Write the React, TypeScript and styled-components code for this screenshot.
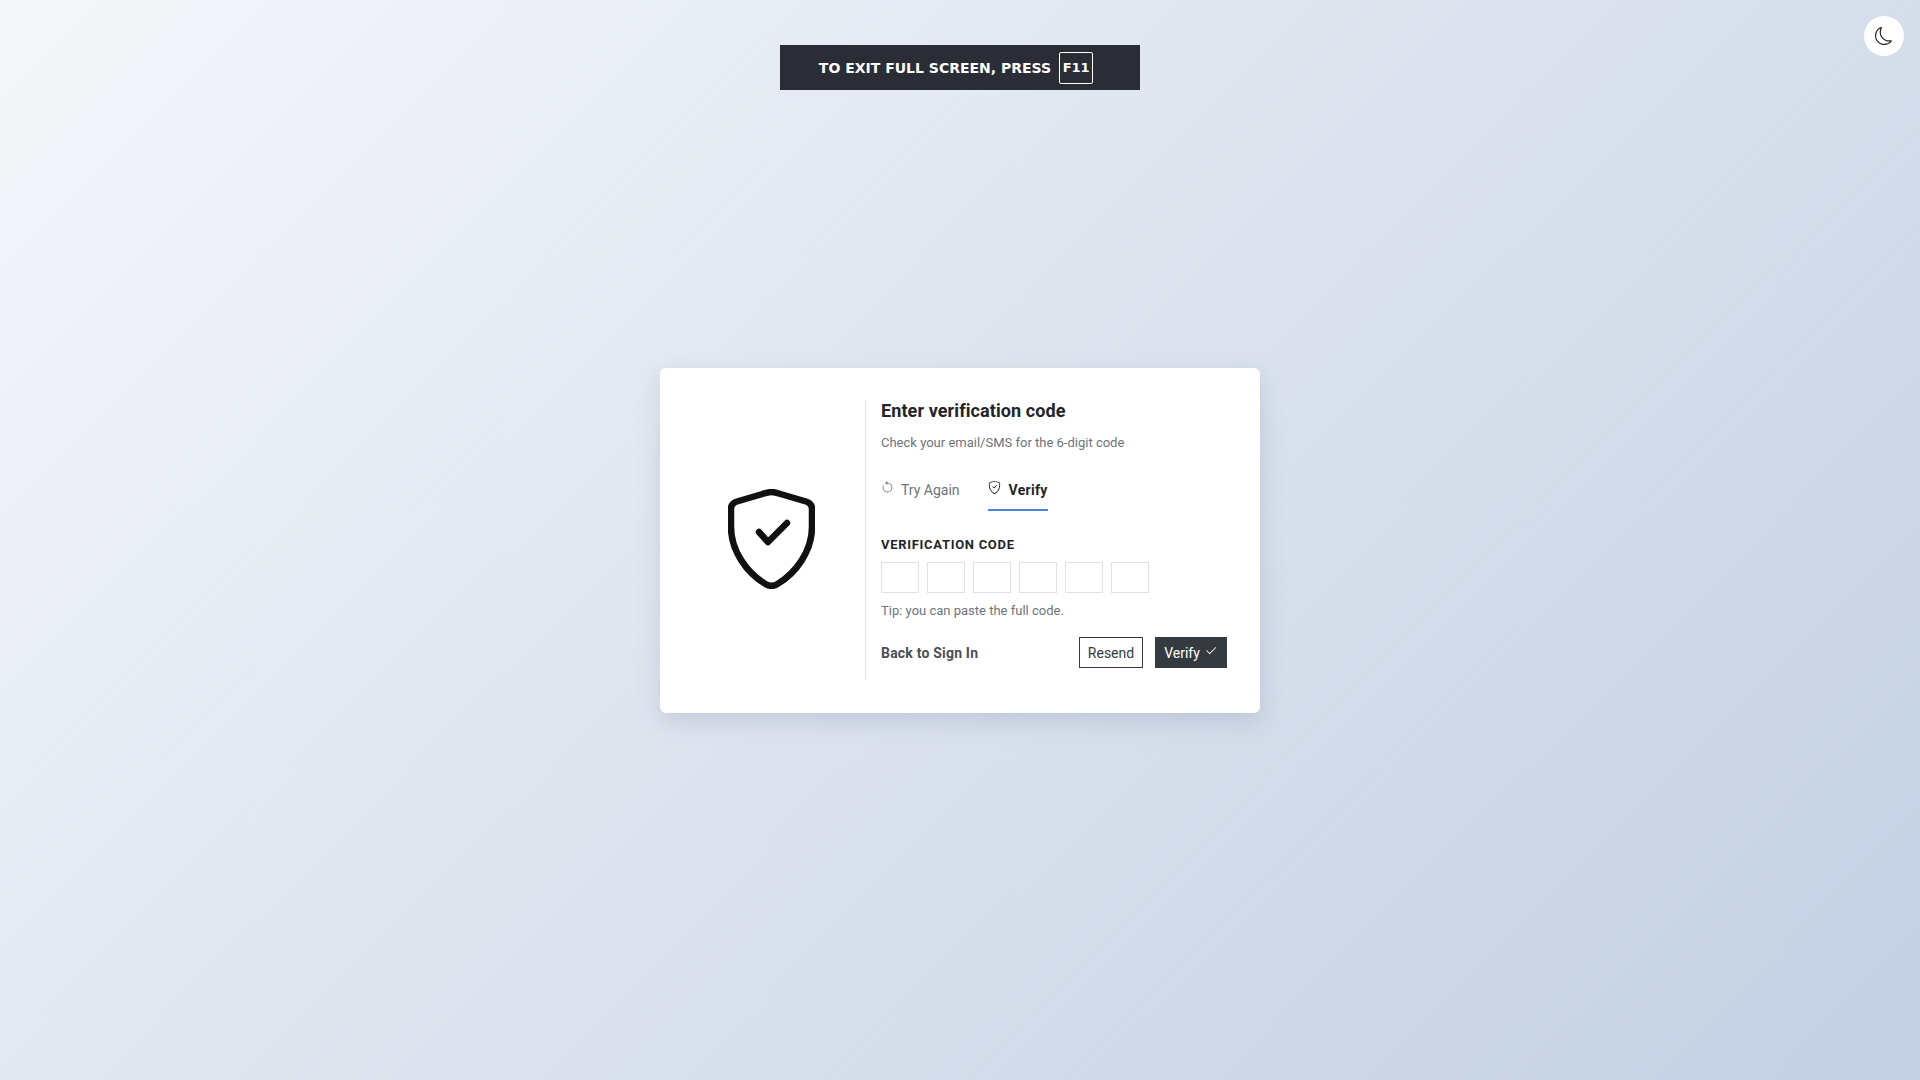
import React from "react";
import styled, { createGlobalStyle } from "styled-components";
import { BsMoon, BsArrowCounterclockwise, BsShieldCheck, BsCheck2 } from "react-icons/bs";

const Global = createGlobalStyle`
  html, body { margin: 0; padding: 0; }
  body { font-family: Roboto, "Noto Sans", sans-serif; }
  * { box-sizing: border-box; }
`;

const Page = styled.div`
  position: relative;
  min-height: 100vh;
  display: flex;
  align-items: center;
  justify-content: center;
  background: linear-gradient(135deg, #f5f7fa 0%, #c3cfe2 100%);
`;

const Banner = styled.div`
  position: absolute;
  top: 45px;
  left: 780px;
  width: 360px;
  height: 45px;
  padding-right: 8px;
  display: flex;
  align-items: center;
  justify-content: center;
  gap: 8px;
  background: #2a2d35;
  color: #fff;
  font-family: "DejaVu Sans", sans-serif;
  font-size: 14px;
  font-weight: 700;
  white-space: nowrap;
`;

const Key = styled.span`
  width: 34px;
  height: 32px;
  display: flex;
  align-items: center;
  justify-content: center;
  border: 1px solid #fff;
  border-radius: 2px;
  font-size: 13px;
`;

const ThemeToggle = styled.button`
  position: absolute;
  top: 16px;
  right: 16px;
  width: 40px;
  height: 40px;
  padding: 0;
  border: 0;
  border-radius: 50%;
  background: #fff;
  color: #212529;
  display: flex;
  align-items: center;
  justify-content: center;
`;

const Card = styled.div`
  width: 600px;
  height: 345px;
  padding: 32px;
  display: flex;
  align-items: center;
  background: #fff;
  border-radius: 6px;
  box-shadow: 0 8px 24px rgba(90, 105, 135, 0.2);
`;

const Aside = styled.div`
  width: 160px;
  height: 280px;
  margin-right: 13px;
  padding: 0 1px 2px 0;
  display: flex;
  align-items: center;
  justify-content: center;
`;

const Main = styled.div`
  flex: 1;
  height: 280px;
  border-left: 1px solid #dee2e6;
  padding-left: 15px;
  padding-right: 1px;
  display: flex;
  flex-direction: column;
`;

const Title = styled.h1`
  margin: 1px 0 0;
  font-size: 18px;
  line-height: 20px;
  font-weight: 700;
  letter-spacing: 0.1px;
  color: #212529;
`;

const Subtitle = styled.p`
  margin: 13px 0 0;
  font-size: 13px;
  line-height: 18px;
  color: #6c757d;
`;

const Tabs = styled.div`
  display: flex;
  gap: 28px;
  margin-top: 19px;
`;

const Tab = styled.div<{ $active?: boolean }>`
  height: 40px;
  padding-top: 9px;
  display: flex;
  align-items: flex-start;
  gap: ${(p) => (p.$active ? "8px" : "7px")};
  font-size: 14px;
  line-height: 20px;
  font-weight: ${(p) => (p.$active ? 700 : 400)};
  letter-spacing: ${(p) => (p.$active ? "0.3px" : "0")};
  color: ${(p) => (p.$active ? "#212529" : "#6c757d")};
  border-bottom: 2px solid ${(p) => (p.$active ? "#4a86d8" : "transparent")};
  svg { margin-top: 1px; }
`;

const Label = styled.div`
  margin-top: 26px;
  font-size: 13px;
  line-height: 16px;
  font-weight: 700;
  letter-spacing: 0.7px;
  color: #212529;
`;

const Boxes = styled.div`
  display: flex;
  gap: 8px;
  margin-top: 9px;
`;

const Box = styled.input`
  width: 38px;
  height: 31px;
  padding: 0;
  border: 1px solid #dee2e6;
  background: #fff;
  outline: 0;
`;

const Tip = styled.p`
  margin: 9px 0 0;
  font-size: 13px;
  line-height: 17px;
  color: #6c757d;
`;

const Actions = styled.div`
  display: flex;
  align-items: center;
  margin-top: 18px;
`;

const BackLink = styled.a`
  font-size: 14px;
  font-weight: 700;
  letter-spacing: 0.2px;
  color: #495057;
  margin-right: auto;
`;

const ActionButton = styled.button<{ $dark?: boolean }>`
  height: 31px;
  width: ${(p) => (p.$dark ? "72px" : "64px")};
  margin-left: ${(p) => (p.$dark ? "12px" : "0")};
  padding: 0;
  display: flex;
  align-items: center;
  justify-content: center;
  gap: 4px;
  font-family: inherit;
  font-size: 14px;
  border: 1px solid #343a40;
  background: ${(p) => (p.$dark ? "#343a40" : "#fff")};
  color: ${(p) => (p.$dark ? "#fff" : "#343a40")};
  svg { margin-top: -3px; }
`;

const ShieldArt = () => (
  <svg width="87" height="100" viewBox="0 0 87 100" fill="none" stroke="#111" strokeWidth="6.5" strokeLinecap="round" strokeLinejoin="round">
    <path d="M43.5 3 C46.5 3 49.5 4 52.5 5 L78 12.5 C82 13.7 84 16 84 20 V38 C84 62 68 84 49.5 95 C45.5 97.5 41.5 97.5 37.5 95 C19 84 3 62 3 38 V20 C3 16 5 13.7 9 12.5 L34.5 5 C37.5 4 40.5 3 43.5 3 Z" />
    <path d="M31 43 L40 53 L59 34" />
  </svg>
);

export default function App() {
  return (
    <Page>
      <Global />
      <Banner>
        TO EXIT FULL SCREEN, PRESS <Key>F11</Key>
      </Banner>
      <ThemeToggle aria-label="Toggle theme">
        <BsMoon size={18} />
      </ThemeToggle>
      <Card>
        <Aside>
          <ShieldArt />
        </Aside>
        <Main>
          <Title>Enter verification code</Title>
          <Subtitle>Check your email/SMS for the 6-digit code</Subtitle>
          <Tabs>
            <Tab>
              <BsArrowCounterclockwise size={13} />
              Try Again
            </Tab>
            <Tab $active>
              <BsShieldCheck size={13} />
              Verify
            </Tab>
          </Tabs>
          <Label>VERIFICATION CODE</Label>
          <Boxes>
            {[0, 1, 2, 3, 4, 5].map((i) => (
              <Box key={i} maxLength={1} />
            ))}
          </Boxes>
          <Tip>Tip: you can paste the full code.</Tip>
          <Actions>
            <BackLink>Back to Sign In</BackLink>
            <ActionButton>Resend</ActionButton>
            <ActionButton $dark>
              Verify <BsCheck2 size={14} />
            </ActionButton>
          </Actions>
        </Main>
      </Card>
    </Page>
  );
}
